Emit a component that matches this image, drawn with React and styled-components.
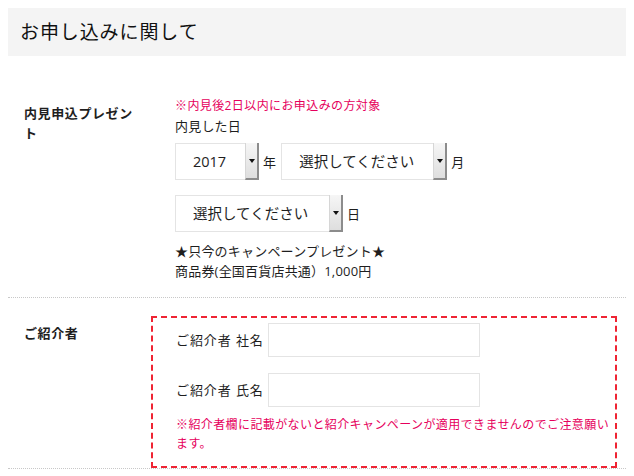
import React from "react";
import styled, { createGlobalStyle } from "styled-components";

const GlobalStyle = createGlobalStyle`
  body {
    margin: 8px;
    background: #fff;
    color: #1e1e1e;
    font-family: "Open Sans", "Noto Sans CJK JP", sans-serif;
    font-size: 13px;
  }
`;

const Heading = styled.h2`
  margin: 0;
  height: 48px;
  line-height: 48px;
  padding: 0 12px;
  background: #f4f4f4;
  font-size: 19px;
  font-weight: normal;
  letter-spacing: 0.9px;
  color: #111;
`;

const Row = styled.div`
  display: flex;
  border-bottom: 1px dotted #c8c8c8;
`;

const Label = styled.div`
  box-sizing: border-box;
  width: 143px;
  flex: none;
  padding: ${(p) => p.$top}px 8px 0 16px;
  font-weight: bold;
  line-height: 20px;
  letter-spacing: 0.6px;
`;

const Cell = styled.div`
  flex: 1;
  padding: ${(p) => p.$pad};
  line-height: 20px;
  letter-spacing: 0.2px;
`;

const Note = styled.div`
  color: #e6005c;
  font-size: 12px;
  letter-spacing: 0.4px;
  line-height: ${(p) => p.$lh || 20}px;
  margin-top: ${(p) => p.$mt || 0}px;
`;

const SelectLine = styled.div`
  display: flex;
  align-items: center;
  gap: 4px;
  margin-top: ${(p) => p.$mt}px;
`;

const Unit = styled.span`
  margin-right: 1px;
`;

const SelectBox = styled.div`
  box-sizing: border-box;
  display: flex;
  width: ${(p) => p.$w}px;
  height: 37px;
  border: 1px solid #e4e4e4;
  background: #fff;
`;

const SelectValue = styled.span`
  flex: 1;
  padding-left: 17px;
  line-height: 35px;
  font-size: 14.5px;
  letter-spacing: 0;
`;

const ArrowBox = styled.span`
  box-sizing: border-box;
  width: 14px;
  margin: -1px -1px -1px 0;
  display: flex;
  align-items: center;
  justify-content: center;
  background: linear-gradient(#f6f6f6, #dedede);
  border-left: 1px solid #d6d6d6;
  border-right: 2px solid #8c8c8c;
  border-bottom: 2px solid #8c8c8c;
  &::after {
    content: "";
    border-left: 3px solid transparent;
    border-right: 3px solid transparent;
    border-top: 4px solid #111;
  }
`;

const Campaign = styled.div`
  margin-top: 9px;
`;

const DashedBox = styled.div`
  border: 2px dashed #ef2433;
  padding: 5px 0 13px 23px;
`;

const Field = styled.div`
  display: flex;
  align-items: center;
  gap: 4px;
  margin-top: ${(p) => p.$mt || 0}px;
`;

const FieldLabel = styled.span`
  letter-spacing: 0.9px;
`;

const TextInput = styled.input`
  box-sizing: border-box;
  width: 212px;
  height: 34px;
  border: 1px solid #e4e4e4;
  outline: none;
  margin: 0;
`;

function Select({ width, value }) {
  return (
    <SelectBox $w={width}>
      <SelectValue>{value}</SelectValue>
      <ArrowBox />
    </SelectBox>
  );
}

export default function App() {
  return (
    <>
      <GlobalStyle />
      <Heading>お申し込みに関して</Heading>
      <Row>
        <Label $top={47}>内見申込プレゼント</Label>
        <Cell $pad="40px 0 16px 24px">
          <Note>※内見後2日以内にお申込みの方対象</Note>
          <div>内見した日</div>
          <SelectLine $mt={7}>
            <Select width={84} value="2017" />
            <Unit>年</Unit>
            <Select width={166} value="選択してください" />
            <Unit>月</Unit>
          </SelectLine>
          <SelectLine $mt={15}>
            <Select width={168} value="選択してください" />
            <Unit>日</Unit>
          </SelectLine>
          <Campaign>
            ★只今のキャンペーンプレゼント★
            <br />
            商品券(全国百貨店共通）1,000円
          </Campaign>
        </Cell>
      </Row>
      <Row>
        <Label $top={25}>ご紹介者</Label>
        <Cell $pad="18px 9px 0 0">
          <DashedBox>
            <Field>
              <FieldLabel>ご紹介者 社名</FieldLabel>
              <TextInput type="text" />
            </Field>
            <Field $mt={16}>
              <FieldLabel>ご紹介者 氏名</FieldLabel>
              <TextInput type="text" />
            </Field>
            <Note $mt={8} $lh={19}>
              ※紹介者欄に記載がないと紹介キャンペーンが適用できませんのでご注意願います。
            </Note>
          </DashedBox>
        </Cell>
      </Row>
    </>
  );
}
